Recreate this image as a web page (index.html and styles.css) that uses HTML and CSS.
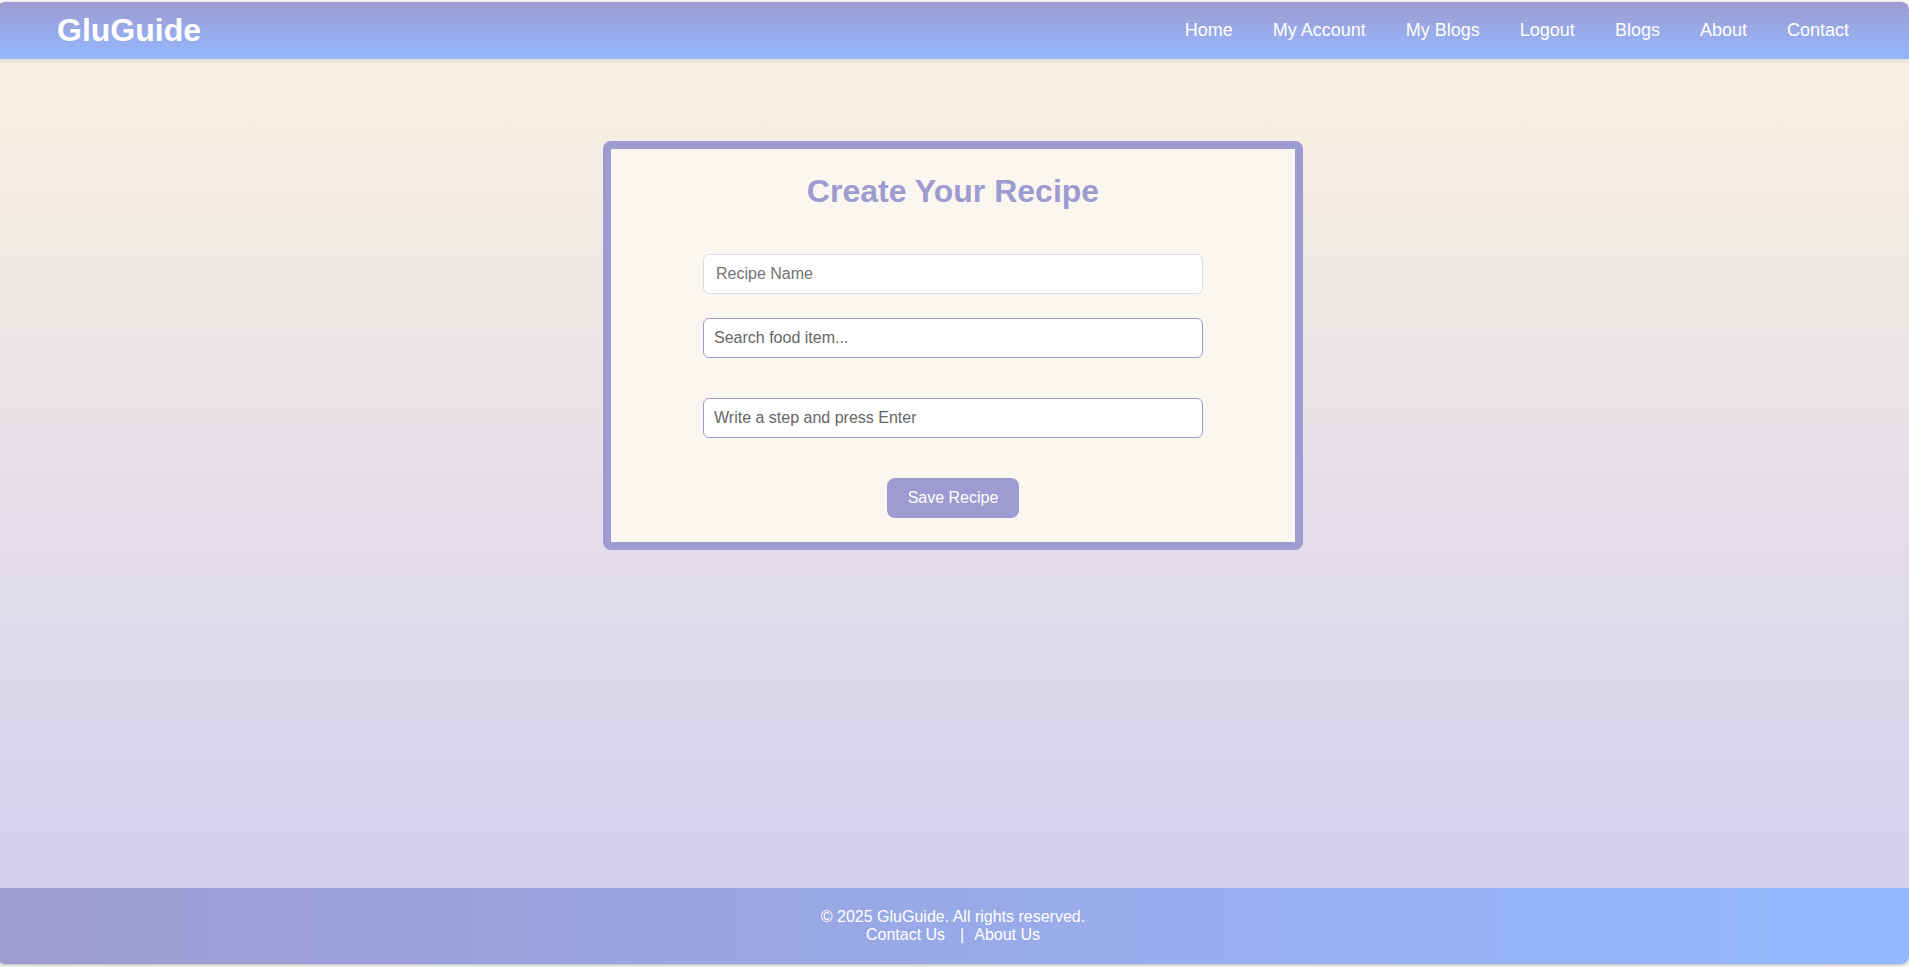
FILE: index.html
```html
<!DOCTYPE html>
<html lang="en">
<head>
  <meta charset="utf-8">
  <meta name="viewport" content="width=device-width, initial-scale=1">
  <title>GluGuide</title>
  <link rel="stylesheet" href="styles.css">
</head>
<body>
  <div class="page">
    <header class="site-header">
      <div class="logo">GluGuide</div>
      <nav class="nav">
        <a href="#">Home</a>
        <a href="#">My Account</a>
        <a href="#">My Blogs</a>
        <a href="#">Logout</a>
        <a href="#">Blogs</a>
        <a href="#">About</a>
        <a href="#">Contact</a>
      </nav>
    </header>
    <main class="main">
      <form class="card">
        <h1 class="card-title">Create Your Recipe</h1>
        <input class="field field-name" type="text" placeholder="Recipe Name" aria-label="Recipe Name">
        <input class="field field-line" type="text" placeholder="Search food item..." aria-label="Search food item">
        <input class="field field-line field-step" type="text" placeholder="Write a step and press Enter" aria-label="Write a step and press Enter">
        <button class="save" type="button">Save Recipe</button>
      </form>
    </main>
    <footer class="site-footer">
      <p>© 2025 GluGuide. All rights reserved.</p>
      <div class="footer-links">
        <a href="#">Contact Us</a>
        <span class="divider">|</span>
        <a href="#">About Us</a>
      </div>
    </footer>
  </div>
</body>
</html>
```
FILE: styles.css
```css
* {
  box-sizing: border-box;
}

body {
  margin: 0;
  background: #f5f5f5;
  font-family: "Liberation Sans", Arial, sans-serif;
  font-size: 16px;
  overflow-x: hidden;
}

.page {
  display: flex;
  flex-direction: column;
  min-height: calc(100vh - 5px);
  margin: 2px 0 3px -3px;
  border-radius: 8px;
  overflow: hidden;
  box-shadow: 0 1px 3px rgba(0, 0, 0, 0.25);
}

.site-header {
  position: relative;
  z-index: 1;
  display: flex;
  align-items: center;
  justify-content: space-between;
  padding: 10px 60px;
  background: linear-gradient(to bottom, #9e9bd0, #93b8ff);
  box-shadow: 0 2px 4px rgba(0, 0, 0, 0.1);
  color: #fff;
}

.logo {
  font-size: 32px;
  font-weight: bold;
  line-height: 37px;
}

.nav {
  display: flex;
  gap: 40px;
  padding-bottom: 2px;
  font-size: 18px;
  line-height: 20px;
}

a {
  color: inherit;
  text-decoration: none;
}

.main {
  flex: 1;
  display: flex;
  flex-direction: column;
  align-items: center;
  padding: 82px 20px;
  background: linear-gradient(to bottom, #f8f1e2, #d3d0ed);
}

.card {
  display: flex;
  flex-direction: column;
  align-items: center;
  width: 100%;
  max-width: 700px;
  padding: 24px;
  border: 8px solid #9e9bd0;
  border-radius: 8px;
  background: #faf7f0;
}

.card-title {
  margin: 0 0 44px;
  color: #9e9bd0;
  font-size: 32px;
  line-height: 37px;
}

.field {
  width: 100%;
  max-width: 500px;
  height: 40px;
  border: 1px solid #9e9bd0;
  border-radius: 6px;
  background: #fff;
  color: #333;
  font: inherit;
}

.field-name {
  margin-bottom: 24px;
  padding: 0 12px;
  border-color: #dcdce0;
}

.field-line {
  padding: 0 10px;
}

.field-name::placeholder {
  color: #757575;
}

.field-line::placeholder {
  color: #666;
}

.field-step {
  margin: 40px 0;
}

.save {
  height: 40px;
  padding: 0 21px;
  border: 0;
  border-radius: 8px;
  background: #9e9bd0;
  color: #fff;
  font: inherit;
}

.site-footer {
  padding: 20px;
  background: linear-gradient(to right, #9e9bd0, #93b8ff);
  color: #fff;
  line-height: 18px;
  text-align: center;
}

.site-footer p {
  margin: 0;
}

.footer-links {
  display: flex;
  justify-content: center;
}

.divider {
  margin: 0 10px 0 15px;
}
```
